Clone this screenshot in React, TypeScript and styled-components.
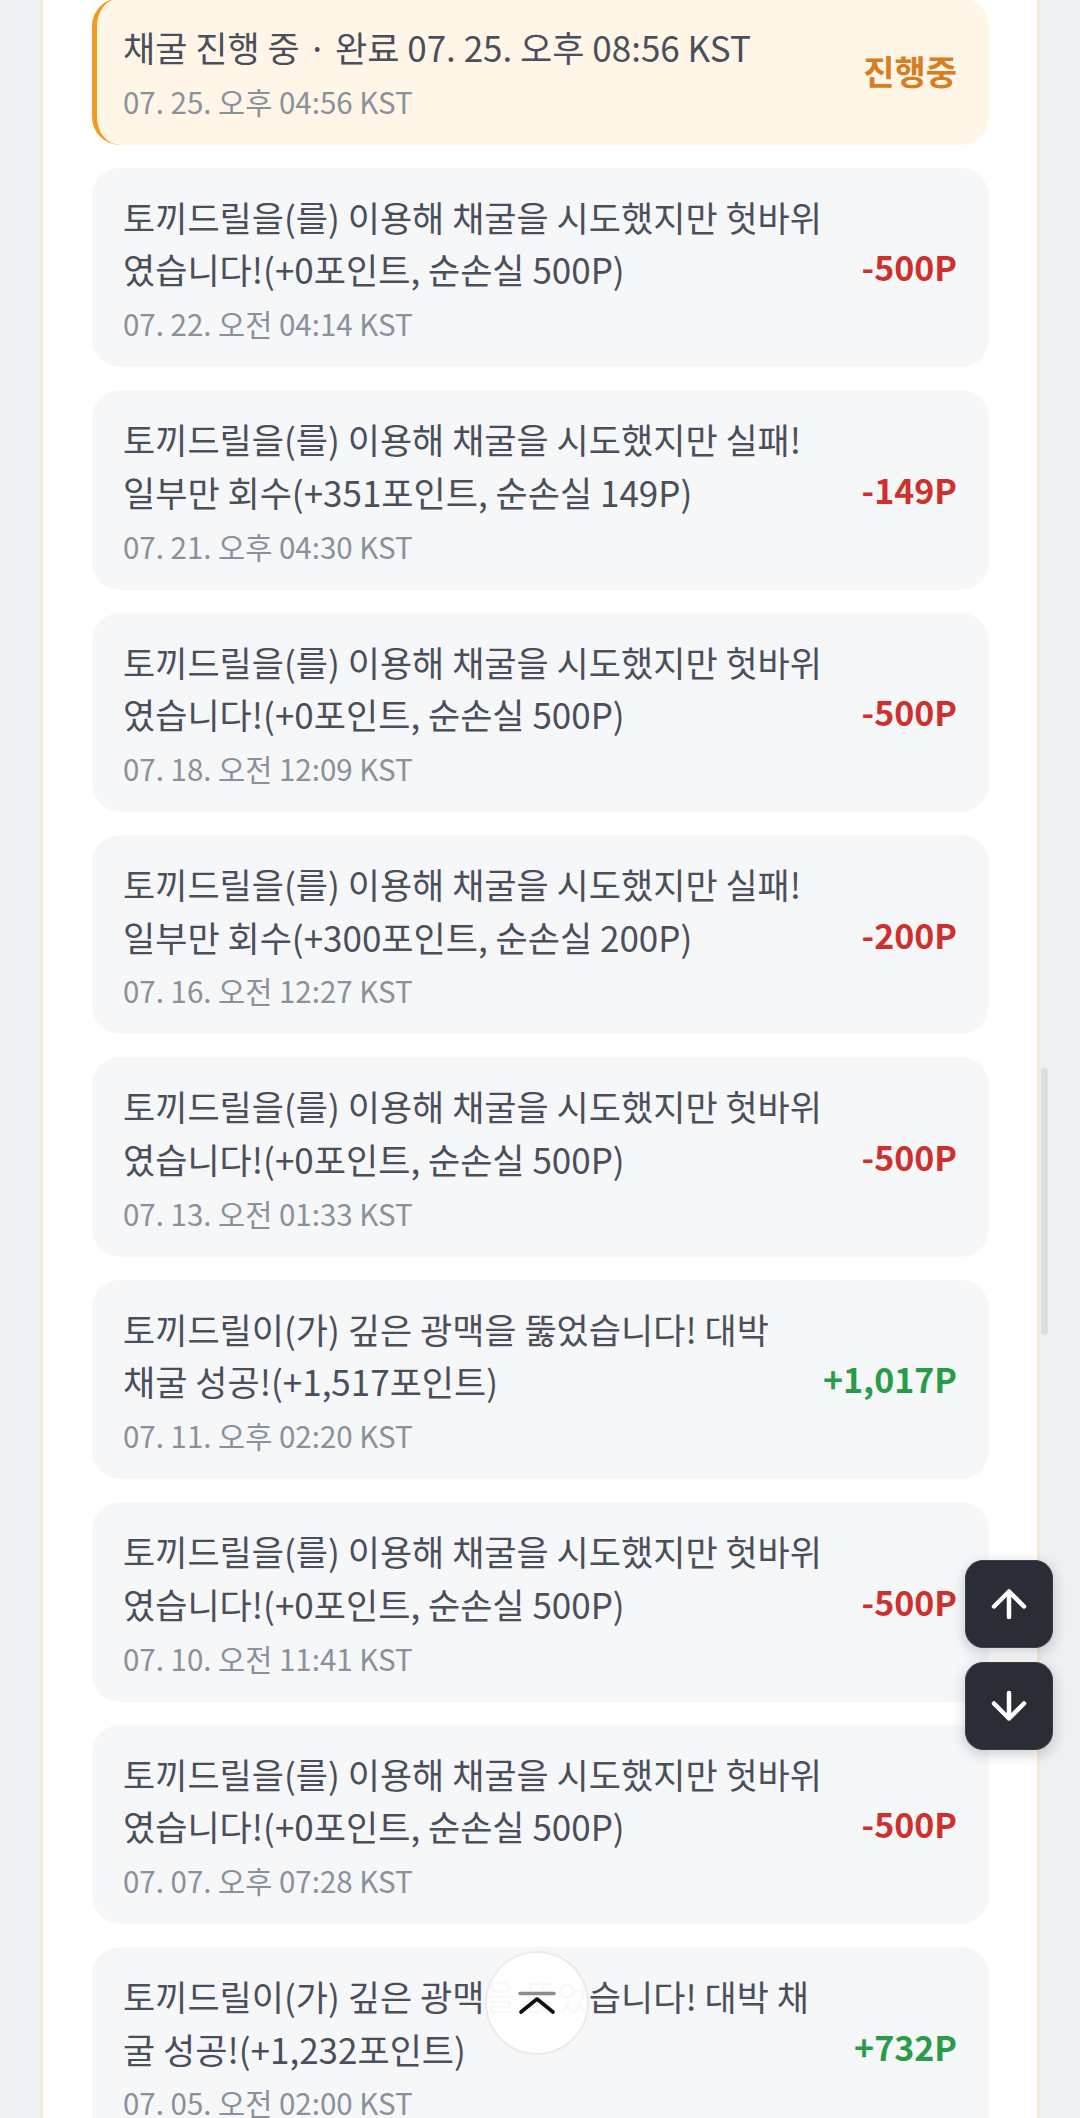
import React from 'react';
import styled, { createGlobalStyle } from 'styled-components';

type Kind = 'loss' | 'gain' | 'pending';

interface Entry {
  text: string;
  date: string;
  amount: string;
  kind: Kind;
}

const FAIL_ZERO = '토끼드릴을(를) 이용해 채굴을 시도했지만 헛바위였습니다!(+0포인트, 순손실 500P)';

const entries: Entry[] = [
  { text: '채굴 진행 중 · 완료 07. 25. 오후 08:56 KST', date: '07. 25. 오후 04:56 KST', amount: '진행중', kind: 'pending' },
  { text: FAIL_ZERO, date: '07. 22. 오전 04:14 KST', amount: '-500P', kind: 'loss' },
  {
    text: '토끼드릴을(를) 이용해 채굴을 시도했지만 실패! 일부만 회수(+351포인트, 순손실 149P)',
    date: '07. 21. 오후 04:30 KST',
    amount: '-149P',
    kind: 'loss',
  },
  { text: FAIL_ZERO, date: '07. 18. 오전 12:09 KST', amount: '-500P', kind: 'loss' },
  {
    text: '토끼드릴을(를) 이용해 채굴을 시도했지만 실패! 일부만 회수(+300포인트, 순손실 200P)',
    date: '07. 16. 오전 12:27 KST',
    amount: '-200P',
    kind: 'loss',
  },
  { text: FAIL_ZERO, date: '07. 13. 오전 01:33 KST', amount: '-500P', kind: 'loss' },
  {
    text: '토끼드릴이(가) 깊은 광맥을 뚫었습니다! 대박 채굴 성공!(+1,517포인트)',
    date: '07. 11. 오후 02:20 KST',
    amount: '+1,017P',
    kind: 'gain',
  },
  { text: FAIL_ZERO, date: '07. 10. 오전 11:41 KST', amount: '-500P', kind: 'loss' },
  { text: FAIL_ZERO, date: '07. 07. 오후 07:28 KST', amount: '-500P', kind: 'loss' },
  {
    text: '토끼드릴이(가) 깊은 광맥을 뚫었습니다! 대박 채굴 성공!(+1,232포인트)',
    date: '07. 05. 오전 02:00 KST',
    amount: '+732P',
    kind: 'gain',
  },
];

const amountColors: Record<Kind, string> = {
  loss: '#d0302c',
  gain: '#2a9c48',
  pending: '#d77d22',
};

const GlobalStyle = createGlobalStyle`
  html, body {
    margin: 0;
    padding: 0;
    background: #eff0f4;
    overflow: hidden;
  }

  body {
    font-family: 'Noto Sans CJK KR', 'Noto Sans', sans-serif;
    -webkit-font-smoothing: antialiased;
  }
`;

const Page = styled.div`
  position: relative;
  height: 2118px;
  overflow: hidden;
  background: #eff0f4;
`;

const Panel = styled.main`
  margin: 0 40px;
  min-height: 100%;
  background: #ffffff;
  border-left: 3px solid #f5ead8;
  border-right: 3px solid #f5ead8;
  padding: 0 48px 0 49px;
`;

const List = styled.ul`
  display: flex;
  flex-direction: column;
  gap: 23px;
  margin: -2px 0 0;
  padding: 0;
  list-style: none;
`;

const Card = styled.li<{ $pending?: boolean }>`
  display: flex;
  align-items: center;
  gap: 32px;
  padding: 23px 32px 24px ${props => (props.$pending ? '26px' : '31px')};
  border-radius: 28px;
  background: ${props => (props.$pending ? '#fff6e8' : '#f6f7f9')};
  border-left: ${props => (props.$pending ? '5px solid #f29b22' : 'none')};
`;

const Body = styled.div`
  flex: 1;
  min-width: 0;
`;

const Message = styled.p`
  margin: 0;
  font-size: 35px;
  line-height: 52.7px;
  color: #4a4f5b;
`;

const Stamp = styled.div`
  margin-top: 7px;
  font-size: 29.5px;
  line-height: 40px;
  color: #8a909c;
`;

const Amount = styled.span<{ $kind: Kind }>`
  flex-shrink: 0;
  font-size: 34px;
  font-weight: 700;
  color: ${props => amountColors[props.$kind]};
`;

const ScrollThumb = styled.div`
  position: absolute;
  left: 1041px;
  top: 1068px;
  width: 7px;
  height: 267px;
  border-radius: 4px;
  background: #dcdde0;
`;

const JumpStack = styled.div`
  position: absolute;
  right: 27px;
  top: 1560px;
  display: flex;
  flex-direction: column;
  gap: 14px;
`;

const JumpButton = styled.button`
  display: flex;
  align-items: center;
  justify-content: center;
  width: 88px;
  height: 88px;
  padding: 0;
  border: 1px solid #3a3e48;
  border-radius: 18px;
  background: #2a2d36;
  box-shadow: 0 4px 14px rgba(20, 24, 32, 0.22);
`;

const TopButton = styled.button`
  position: absolute;
  left: 485px;
  top: 1951px;
  display: flex;
  align-items: center;
  justify-content: center;
  width: 104px;
  height: 104px;
  padding: 0;
  border: 2px solid #ebebed;
  border-radius: 50%;
  background: rgba(255, 255, 255, 0.96);
`;

const Arrow: React.FC<{ down?: boolean }> = ({ down }) => (
  <svg width="40" height="40" viewBox="0 0 40 40" style={down ? { transform: 'rotate(180deg)' } : undefined}>
    <path
      d="M20 7.5V33M5 22.5L20 7.5L35 22.5"
      fill="none"
      stroke="#ffffff"
      strokeWidth="4.5"
      strokeLinecap="round"
      strokeLinejoin="round"
    />
  </svg>
);

const HandleChevron = () => (
  <svg width="44" height="40" viewBox="0 0 44 40">
    <path d="M5 10.5H39" stroke="#8c8c8c" strokeWidth="3.5" strokeLinecap="round" />
    <path d="M6 29L22 16L38 29" fill="none" stroke="#111111" strokeWidth="3.6" strokeLinecap="round" strokeLinejoin="round" />
  </svg>
);

const App: React.FC = () => (
  <Page>
    <GlobalStyle />
    <Panel>
      <List>
        {entries.map((entry, i) => (
          <Card key={i} $pending={entry.kind === 'pending'}>
            <Body>
              <Message>{entry.text}</Message>
              <Stamp>{entry.date}</Stamp>
            </Body>
            <Amount $kind={entry.kind}>{entry.amount}</Amount>
          </Card>
        ))}
      </List>
    </Panel>
    <ScrollThumb />
    <JumpStack>
      <JumpButton aria-label="맨 위로">
        <Arrow />
      </JumpButton>
      <JumpButton aria-label="맨 아래로">
        <Arrow down />
      </JumpButton>
    </JumpStack>
    <TopButton aria-label="위로">
      <HandleChevron />
    </TopButton>
  </Page>
);

export default App;
